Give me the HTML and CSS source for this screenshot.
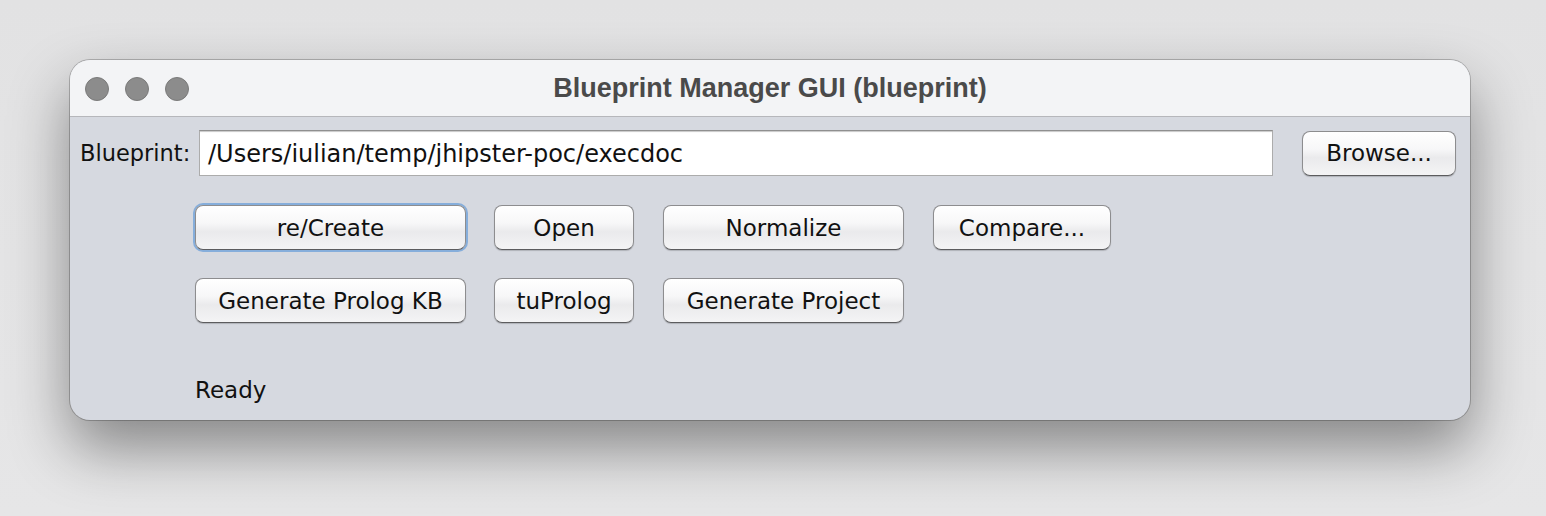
FILE: index.html
```html
<!DOCTYPE html>
<html>
<head>
<meta charset="utf-8">
<link rel="stylesheet" href="styles.css">
</head>
<body>
<div class="window">
  <div class="titlebar">
    <div class="lights">
      <span class="light"></span><span class="light"></span><span class="light"></span>
    </div>
    <div class="title">Blueprint Manager GUI (blueprint)</div>
    <div></div>
  </div>
  <div class="content">
    <div class="path-row">
      <span class="label">Blueprint:</span>
      <div class="field">/Users/iulian/temp/jhipster-poc/execdoc</div>
      <button class="btn browse">Browse...</button>
    </div>
    <div class="actions">
      <button class="btn w1 focus">re/Create</button>
      <button class="btn w2">Open</button>
      <button class="btn w3">Normalize</button>
      <button class="btn w4">Compare...</button>
      <button class="btn w1">Generate Prolog KB</button>
      <button class="btn w2">tuProlog</button>
      <button class="btn w3">Generate Project</button>
    </div>
    <div class="status">Ready</div>
  </div>
</div>
</body>
</html>
```
FILE: styles.css
```css
html, body {
  margin: 0;
  padding: 0;
}
body {
  width: 1546px;
  height: 516px;
  background: linear-gradient(to bottom, #e2e2e3, #e6e6e7);
  overflow: hidden;
  font-family: "DejaVu Sans", "Noto Sans", sans-serif;
}
.window {
  margin: 60px 0 0 70px;
  width: 1400px;
  height: 360px;
  border-radius: 20px;
  background: #d6d9e0;
  overflow: hidden;
  box-shadow: 0 0 0 1px rgba(0, 0, 0, 0.22), 0 28px 60px rgba(0, 0, 0, 0.42);
}
.titlebar {
  height: 56px;
  background: #f3f4f6;
  border-bottom: 1px solid #b6b7bb;
  display: grid;
  grid-template-columns: 1fr auto 1fr;
  align-items: center;
}
.lights {
  display: flex;
  gap: 16px;
  padding-left: 15px;
  padding-top: 2px;
}
.light {
  width: 22px;
  height: 22px;
  border-radius: 50%;
  background: #8c8c8c;
  border: 1px solid #7a7a7a;
}
.title {
  font-family: "Liberation Sans", Arial, sans-serif;
  font-weight: bold;
  font-size: 27px;
  color: #4a4a4a;
  padding-top: 1px;
}
.content {
  padding: 13px 14px 0 10px;
}
.path-row {
  display: flex;
  align-items: center;
}
.label {
  font-size: 22.5px;
  color: #111;
  width: 119px;
  flex: none;
}
.field {
  width: 1074px;
  flex: none;
  box-sizing: border-box;
  height: 46px;
  background: #fff;
  border: 1px solid #acacac;
  border-top-color: #8f8f8f;
  box-shadow: inset 0 2px 1px -1px #c8c8c8;
  font-size: 24px;
  color: #111;
  padding-left: 8px;
  display: flex;
  align-items: center;
  padding-top: 1px;
  margin-right: 29px;
}
.btn {
  font-family: "DejaVu Sans", "Noto Sans", sans-serif;
  font-size: 23px;
  color: #111;
  height: 45px;
  box-sizing: border-box;
  border: 1px solid #8d8d8f;
  border-bottom-color: #5c5c5e;
  border-radius: 8px;
  background: linear-gradient(to bottom, #ffffff 0%, #f7f7f8 40%, #eaeaec 60%, #f4f4f5 100%);
  box-shadow: 0 1px 1px rgba(0, 0, 0, 0.18);
  padding: 0;
  margin: 0;
}
.browse {
  width: 154px;
  flex: none;
}
.actions {
  margin: 29px 0 0 115px;
  display: grid;
  grid-template-columns: 270px 140px 241px 178px;
  column-gap: 29px;
  row-gap: 28px;
  justify-content: start;
}
.w1 { width: 271px; }
.focus {
  box-shadow: 0 0 0 2px #86aedb, 0 1px 1px rgba(0, 0, 0, 0.18);
}
.status {
  margin: 54px 0 0 115px;
  font-size: 23px;
  color: #111;
}
```
